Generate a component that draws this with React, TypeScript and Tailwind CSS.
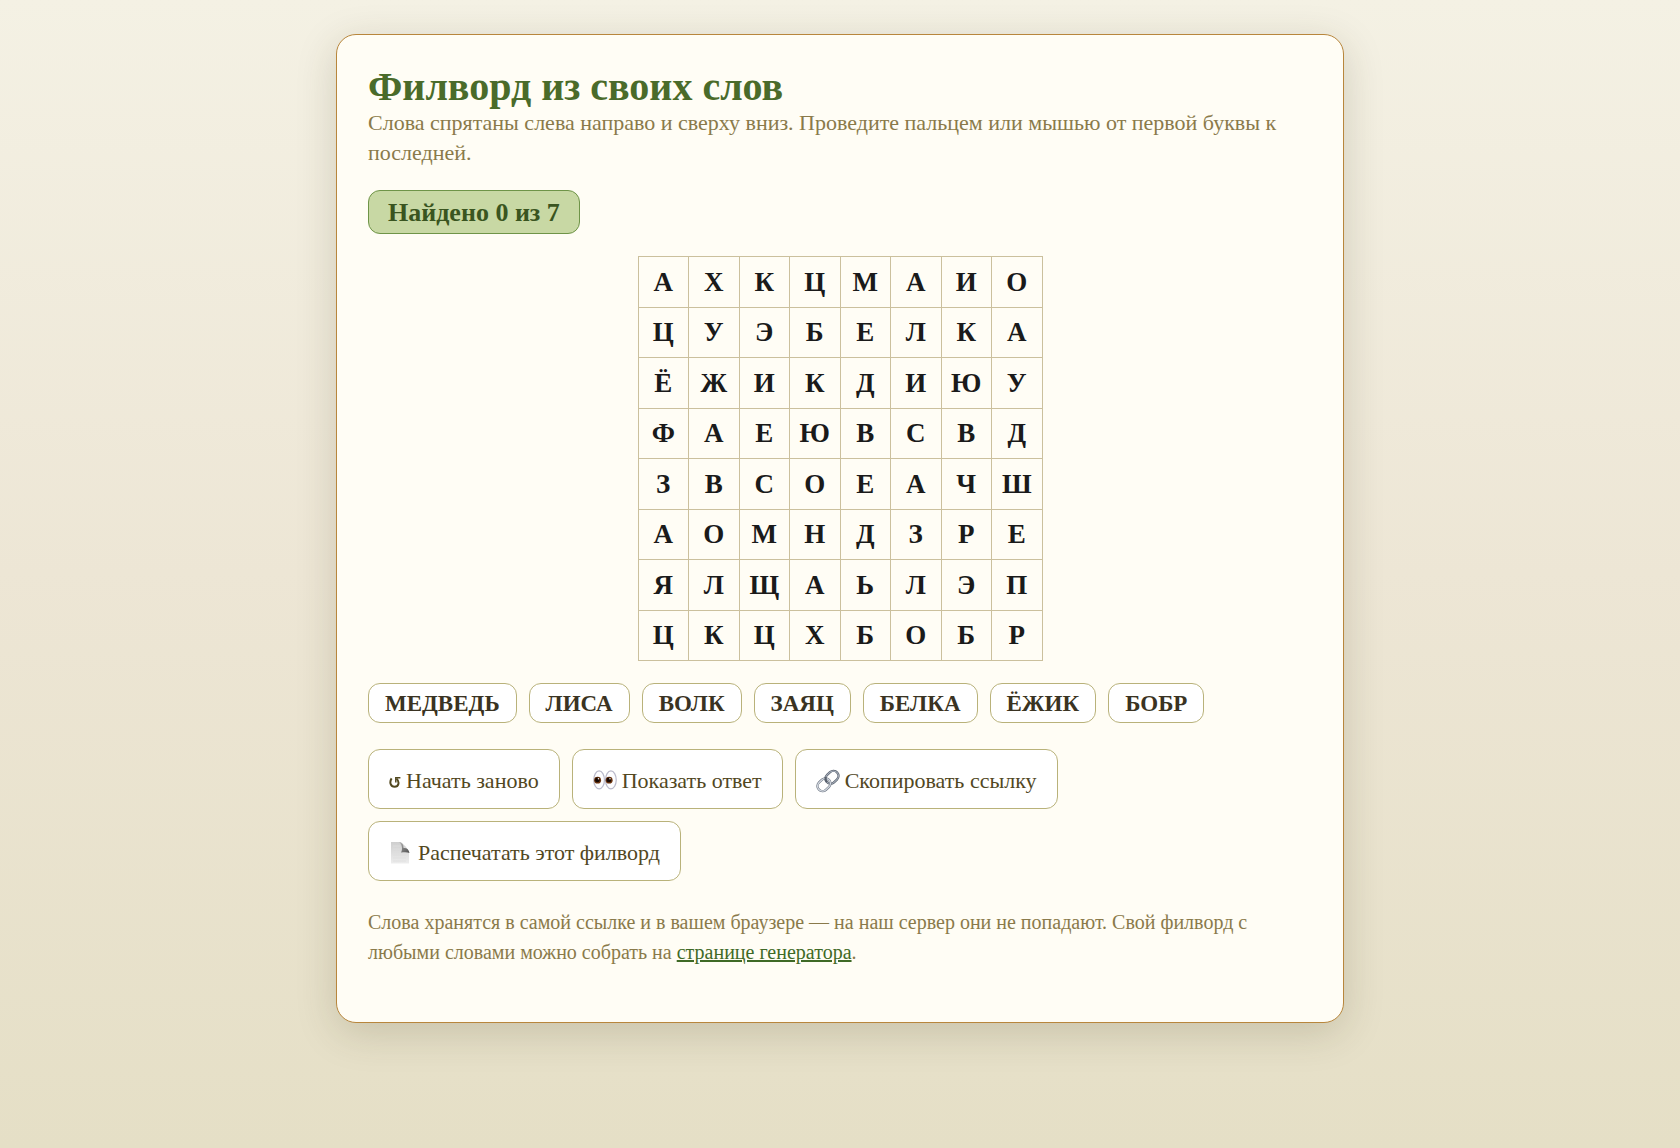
import type { ReactNode } from "react";

const rows = ["АХКЦМАИО", "ЦУЭБЕЛКА", "ЁЖИКДИЮУ", "ФАЕЮВСВД", "ЗВСОЕАЧШ", "АОМНДЗРЕ", "ЯЛЩАЬЛЭП", "ЦКЦХБОБР"];

const words = ["МЕДВЕДЬ", "ЛИСА", "ВОЛК", "ЗАЯЦ", "БЕЛКА", "ЁЖИК", "БОБР"];

function RestartIcon() {
  return (
    <svg className="mt-0.5 h-3 w-3" viewBox="0 0 12 12" fill="none" stroke="currentColor" aria-hidden="true">
      <path d="M2.600 2.400C0 6.500 1.800 10.800 5.600 10.800 9.800 10.800 10.800 6 7.600 2.600" strokeWidth="2" />
      <path d="M6.800 6.600V1.800H11.400" strokeWidth="1.500" />
    </svg>
  );
}

function EyesIcon() {
  return (
    <svg className="h-6 w-6" viewBox="1 0 22 22" aria-hidden="true">
      <g fill="#fdfdff" stroke="#b9b9ca" strokeWidth="1.100">
        <ellipse cx="6.600" cy="10" rx="4.900" ry="8.200" />
        <ellipse cx="17.400" cy="10" rx="4.900" ry="8.200" />
      </g>
      <g fill="#6b3410">
        <circle cx="5.200" cy="10.200" r="3.200" />
        <circle cx="15.800" cy="10.200" r="3.200" />
      </g>
      <g fill="#160803">
        <circle cx="5" cy="10" r="2.200" />
        <circle cx="15.600" cy="10" r="2.200" />
      </g>
      <circle cx="6" cy="9" r=".7" fill="#fff" />
      <circle cx="16.600" cy="9" r=".7" fill="#fff" />
    </svg>
  );
}

function LinkIcon() {
  return (
    <svg className="h-6 w-6" viewBox="0 0 24 24" fill="none" aria-hidden="true">
      <g transform="rotate(-43 12 12)">
        <rect x="10.500" y="7" width="14" height="10" rx="5" stroke="#59616d" strokeWidth="2.400" />
        <rect x="10.500" y="7" width="14" height="10" rx="5" stroke="#aab2bf" strokeWidth="1" />
        <rect x="-0.500" y="7" width="14" height="10" rx="5" stroke="#68717e" strokeWidth="2.400" />
        <rect x="-0.500" y="7" width="14" height="10" rx="5" stroke="#d5dae2" strokeWidth="1.200" />
        <path d="M10.500 12a5 5 0 0 1 2.500-4.300" stroke="#59616d" strokeWidth="2.200" />
      </g>
    </svg>
  );
}

function PageIcon() {
  return (
    <svg className="h-6 w-6" viewBox="0 0 24 24" aria-hidden="true">
      <defs>
        <linearGradient id="sheet" x1="0" y1="0" x2="0" y2="1">
          <stop offset="0" stopColor="#cfcfcf" />
          <stop offset="1" stopColor="#ededed" />
        </linearGradient>
        <linearGradient id="fold" x1="0" y1="0" x2="1" y2="1">
          <stop offset="0" stopColor="#bdbdbd" />
          <stop offset=".5" stopColor="#7d7d7d" />
          <stop offset="1" stopColor="#505050" />
        </linearGradient>
      </defs>
      <path d="M2 1h9.500C14 3 19 7 20 11.500V22.500H2Z" fill="url(#sheet)" />
      <path d="M4 5h7M4 8h7M4 11h8M4 14h13M4 17h13M4 20h13" stroke="#dedede" strokeWidth=".8" />
      <path d="M10 1c3.500.3 4.500 3 4.500 6 3-.5 5.500 1.500 6 5-2-1-5-1-8.500-.5C14 8 13 3.500 10 1Z" fill="url(#fold)" />
    </svg>
  );
}

function ActionButton({ icon, children }: { icon: ReactNode; children: ReactNode }) {
  return (
    <button
      type="button"
      className="flex h-[60px] items-center gap-[5px] rounded-xl border border-[#b9b27a] bg-white px-5 pt-1 text-[22px] leading-7 text-[#52481f]"
    >
      {icon}
      <span>{children}</span>
    </button>
  );
}

export default function App() {
  return (
    <div className="min-h-screen bg-linear-to-b from-[#f4f1e4] via-[#ede6d5] to-[#e5dfc6] px-4 pt-[34px] pb-16 font-['Liberation_Serif',serif]">
      <main className="mx-auto max-w-[1008px] rounded-[20px] border border-[#b8863c] bg-[#fffdf5] px-[31px] pt-[30px] pb-[55px] shadow-[0_10px_40px_rgba(60,55,20,0.18)]">
        <h1 className="text-[40px] leading-[43px] font-bold text-[#4a6b2a]">Филворд из своих слов</h1>
        <p className="text-[22px] leading-[30px] text-[#8a7a4a]">
          Слова спрятаны слева направо и сверху вниз. Проведите пальцем или мышью от первой буквы к последней.
        </p>
        <p className="mt-[22px] flex h-11 w-fit items-center rounded-xl border border-[#6f9448] bg-[#c8d8a4] px-[19px] text-[26px] font-bold text-[#3a5520]">
          Найдено 0 из 7
        </p>
        <table className="mx-auto mt-[22px] h-[405px] w-[405px] table-fixed border-collapse text-[27px] leading-8 font-bold text-[#1a1a1a]">
          <tbody>
            {rows.map((row, r) => (
              <tr key={r}>
                {[...row].map((letter, c) => (
                  <td key={c} className="border border-[#cbc09d] p-0 text-center">
                    {letter}
                  </td>
                ))}
              </tr>
            ))}
          </tbody>
        </table>
        <ul className="mt-[22px] flex flex-wrap gap-3">
          {words.map((word) => (
            <li
              key={word}
              className="flex h-10 items-center rounded-xl border border-[#b9b27a] bg-white px-4 pt-0.5 text-[23px] font-bold text-[#3a3322]"
            >
              {word}
            </li>
          ))}
        </ul>
        <div className="mt-[26px] flex max-w-[860px] flex-wrap gap-3">
          <ActionButton icon={<RestartIcon />}>Начать заново</ActionButton>
          <ActionButton icon={<EyesIcon />}>Показать ответ</ActionButton>
          <ActionButton icon={<LinkIcon />}>Скопировать ссылку</ActionButton>
          <ActionButton icon={<PageIcon />}>Распечатать этот филворд</ActionButton>
        </div>
        <p className="mt-[26px] text-xl leading-[30px] text-[#8a7a4a]">
          Слова хранятся в самой ссылке и в вашем браузере — на наш сервер они не попадают. Свой филворд с любыми
          словами можно собрать на{" "}
          <a href="#generator" className="text-[#3f6a26] underline">
            странице генератора
          </a>
          .
        </p>
      </main>
    </div>
  );
}
